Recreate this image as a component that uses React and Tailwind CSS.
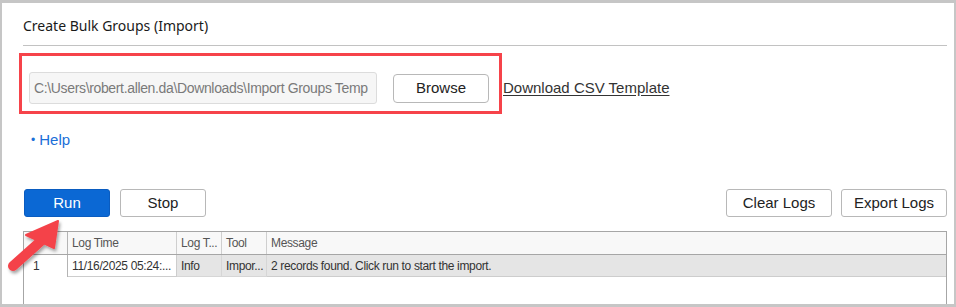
import React from "react";

function Arrow() {
  return (
    <svg
      className="absolute left-0 top-[210px] pointer-events-none"
      width="70"
      height="65"
      viewBox="0 0 70 65"
    >
      <defs>
        <filter id="sh" x="-30%" y="-30%" width="160%" height="160%">
          <feDropShadow dx="1.5" dy="2.5" stdDeviation="1.6" floodColor="#000" floodOpacity="0.35" />
        </filter>
      </defs>
      <g filter="url(#sh)">
        <line x1="39" y1="28" x2="11" y2="53" stroke="#f4434a" strokeWidth="10" strokeLinecap="round" />
        <polygon points="56,8 24,22 52,35" fill="#f4434a" stroke="#f4434a" strokeWidth="2" strokeLinejoin="round" />
      </g>
    </svg>
  );
}

export default function App() {
  const btn =
    "h-[28px] rounded-[3px] border border-[#b8b8b8] bg-white text-[15px] text-[#222] flex items-center justify-center";
  return (
    <div className="relative w-[956px] h-[307px] overflow-hidden bg-white border-t-[3px] border-l-[2px] border-r-[2px] border-b-[3px] border-[#c6c6c6] flex flex-col pl-[21px] pr-[7px]">
      <div
        className="pt-[14px] h-[42px] text-[14px] leading-[18px] text-[#1a1a1a]"
        style={{ fontFamily: '"Noto Sans", sans-serif' }}
      >
        Create Bulk Groups (Import)
      </div>
      <div className="border-t border-[#c2c2c2]" />

      <div className="flex items-center mt-[7px]" style={{ fontFamily: '"Liberation Sans", Arial, sans-serif' }}>
        <div className="-ml-[4px] border-[3px] border-[#f6434a] flex items-center pl-[7px] pr-[10px] pt-[16px] pb-[7px]">
          <div className="w-[348px] h-[32px] rounded-[3px] border border-[#dcdcdc] bg-[#f6f6f6] flex items-center pl-[4px] overflow-hidden whitespace-nowrap text-[14px] tracking-[-0.35px] text-[#7a7a7a]">
            C:\Users\robert.allen.da\Downloads\Import Groups Temp
          </div>
          <div className="ml-[16px] w-[96px] h-[29px] rounded-[4px] border border-[#b8b8b8] bg-white flex items-center justify-center text-[15px] text-[#222]">
            Browse
          </div>
        </div>
        <a className="ml-[1px] text-[15px] text-[#333] underline underline-offset-2 mt-[10px]">
          Download CSV Template
        </a>
      </div>

      <div
        className="mt-[17px] ml-[8px] flex items-center text-[15px] leading-[18px] text-[#1b6fd8]"
        style={{ fontFamily: '"Liberation Sans", Arial, sans-serif' }}
      >
        <span className="text-[12px] mr-[4px]">•</span>
        <span>Help</span>
      </div>

      <div className="mt-[40px] flex items-center" style={{ fontFamily: '"Liberation Sans", Arial, sans-serif' }}>
        <div className="ml-[1px] w-[86px] h-[28px] rounded-[3px] border border-[#0a5cc0] bg-[#0b68d4] text-white text-[15px] flex items-center justify-center">
          Run
        </div>
        <div className={`ml-[10px] w-[86px] ${btn}`}>Stop</div>
        <div className="flex-1" />
        <div className={`w-[106px] ${btn}`}>Clear Logs</div>
        <div className={`ml-[9px] w-[106px] ${btn}`}>Export Logs</div>
      </div>

      <div
        className="mt-[14px] flex-1 border-t border-l border-r border-[#a6a6a6] text-[12px] tracking-[-0.35px]"
        style={{ fontFamily: '"Liberation Sans", Arial, sans-serif' }}
      >
        <div className="flex h-[23px] bg-[#f8f8f8] border-b border-[#a6a6a6] text-[#555]">
          <div className="w-[44px] border-r border-[#b4b4b4]" />
          <div className="w-[109px] border-r border-[#cfcfcf] flex items-center pl-[4px]">Log Time</div>
          <div className="w-[45px] border-r border-[#cfcfcf] flex items-center pl-[4px]">Log T...</div>
          <div className="w-[45px] border-r border-[#cfcfcf] flex items-center pl-[4px]">Tool</div>
          <div className="flex-1 flex items-center pl-[4px]">Message</div>
        </div>
        <div className="flex h-[22px] text-[#333]">
          <div className="w-[44px] border-r border-[#b4b4b4] flex items-center pl-[9px] bg-white">1</div>
          <div className="w-[109px] border-b border-r border-[#cdcdcd] bg-white flex items-center pl-[4px] whitespace-nowrap overflow-hidden">
            11/16/2025 05:24:...
          </div>
          <div className="w-[45px] border-b border-r border-[#d6d6d6] bg-[#e5e5e5] flex items-center pl-[4px]">Info</div>
          <div className="w-[45px] border-b border-r border-[#d6d6d6] bg-[#e5e5e5] flex items-center pl-[4px] whitespace-nowrap overflow-hidden">
            Impor...
          </div>
          <div className="flex-1 border-b border-[#cdcdcd] bg-[#e5e5e5] flex items-center pl-[4px] whitespace-nowrap">
            2 records found. Click run to start the import.
          </div>
        </div>
      </div>

      <Arrow />
    </div>
  );
}
